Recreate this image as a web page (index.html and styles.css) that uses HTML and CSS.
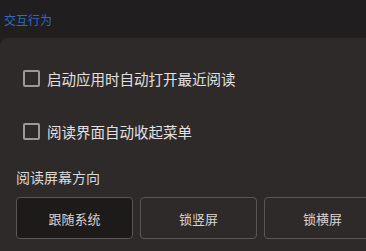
FILE: index.html
```html
<!DOCTYPE html>
<html>
	<head>
		<meta charset="utf-8">
		<title>交互行为</title>
		<link rel="stylesheet" href="styles.css">
	</head>
	<body>
		<div class=header>交互行为</div>
		<div class=panel>
			<label class=option><span class=box></span><span>启动应用时自动打开最近阅读</span></label>
			<label class=option><span class=box></span><span>阅读界面自动收起菜单</span></label>
			<p class=label>阅读屏幕方向</p>
			<div class=choices>
				<button class=selected>跟随系统</button>
				<button>锁竖屏</button>
				<button>锁横屏</button>
			</div>
		</div>
	</body>
</html>
```

FILE: styles.css
```css
body, button {
	font-family: 'Noto Sans CJK SC', 'Noto Sans', sans-serif;
}

body {
	margin: 0;
	background-color: #211e1f;
	color: #e4e0e0;
	overflow: hidden;
}

.header {
	height: 38px;
	box-sizing: border-box;
	padding: 11px 0 0 4px;
	font-size: 12px;
	line-height: 18px;
	color: #2c6cc4;
}

.panel {
	background-color: #2e2a2a;
	border-top-left-radius: 8px;
	padding-top: 14px;
	height: 213px;
	box-sizing: border-box;
}

.option {
	display: flex;
	align-items: center;
	gap: 7px;
	height: 53px;
	padding-left: 23px;
	font-size: 14.5px;
}

.box {
	width: 17px;
	height: 17px;
	box-sizing: border-box;
	border: 2px solid #9c9898;
	border-radius: 2px;
}

.label {
	margin: 9px 0 0 16px;
	font-size: 14px;
	line-height: 20px;
	color: #dcd8d8;
}

.choices {
	display: flex;
	gap: 7px;
	margin-top: 10px;
	padding-left: 16px;
}

button {
	flex: none;
	width: 117px;
	height: 42px;
	background-color: #2e2a2a;
	color: #d8d4d4;
	border: 1.5px solid #5a5656;
	border-radius: 4px;
	font-size: 13px;
	padding: 0;
}

button.selected {
	background-color: #1d1a1a;
}
```
